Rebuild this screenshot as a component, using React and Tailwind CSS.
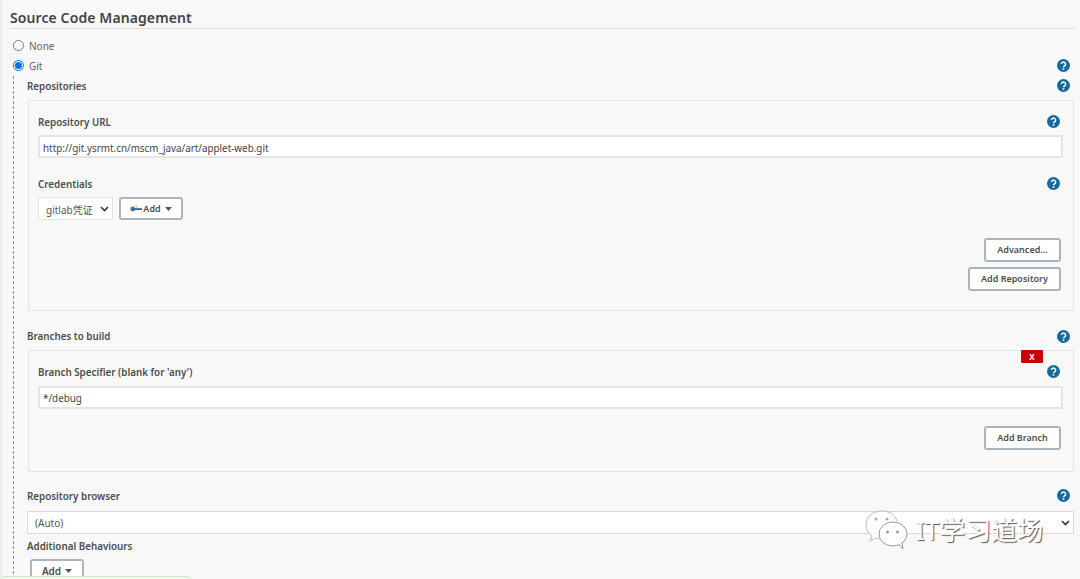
const Help = ({ lift = true }) => (
  <svg className={`shrink-0 ${lift ? "mb-[2px]" : ""}`} width="13" height="13" viewBox="0 0 13 13">
    <circle cx="6.5" cy="6.5" r="6.5" fill="#14699f" />
    <path d="M4.4 5.1a2.1 2 0 1 1 3.2 1.7c-.7.4-1.1.8-1.1 1.5" fill="none" stroke="#fff" strokeWidth="1.5" />
    <rect x="5.7" y="9.2" width="1.6" height="1.6" fill="#fff" />
  </svg>
);

const Label = ({ children, className = "", lift = true }) => (
  <div className={`flex items-center justify-between font-semibold text-[9.8px] text-[#4d4d4d] ${className}`}>
    <span className="pt-[2px]">{children}</span>
    <Help lift={lift} />
  </div>
);

const Btn = ({ children, className = "" }) => (
  <div className={`flex items-center justify-center bg-white border-2 border-[#a9b5bd] rounded-[3px] font-semibold text-[9px] text-[#4d4d4d] ${className}`}>
    {children}
  </div>
);

const Caret = () => (
  <svg className="ml-1" width="7" height="4" viewBox="0 0 7 4"><path d="M0 0h7L3.5 4z" fill="#555" /></svg>
);

const Chevron = () => (
  <svg width="9" height="6" viewBox="0 0 9 6"><path d="M1 1l3.5 3.5L8 1" fill="none" stroke="#333" strokeWidth="1.6" /></svg>
);

const TextBox = ({ children, className = "" }) => (
  <div className={`flex items-center h-[23px] pl-[3px] bg-white border-2 border-[#e4e4e4] rounded-[2px] text-[9.85px] text-[#444] ${className}`}>
    {children}
  </div>
);

export default function App() {
  return (
    <div className="relative w-[1080px] h-[579px] overflow-hidden bg-[#f8f8f8] border-l-2 border-[#ececec] font-['Noto_Sans','Open_Sans',sans-serif]">
      <div className="ml-[8px] mr-[5px] h-[29px] pt-[6px] border-b border-[#e2e2e2] font-semibold text-[14px] leading-[23px] tracking-[0.1px] text-[#444]">
        Source Code Management
      </div>

      <div className="flex items-center h-[20px] mt-[7px] ml-[11px] text-[10px] text-[#666]">
        <span className="w-[11px] h-[11px] mb-[2px] rounded-full border border-[#777] bg-white mr-[5px]" />
        None
      </div>
      <div className="flex items-center justify-between h-[20px] ml-[11px] mr-[10px] text-[10px] text-[#666]">
        <div className="flex items-center">
          <span className="flex items-center justify-center w-[11px] h-[11px] mb-[1px] rounded-full border border-[#0f6fe0] bg-white mr-[5px]">
            <span className="w-[7px] h-[7px] rounded-full bg-[#0f6fe0]" />
          </span>
          Git
        </div>
        <Help />
      </div>

      <div className="ml-[11px] mr-[6px] border-l border-dashed border-[#8d8d8d] pl-[13px] h-[503px]">
        <div className="mr-[4px]">
          <Label className="h-[20px]">Repositories</Label>
        </div>
        <div className="h-[211px] mt-[4px] ml-[1px] pl-[9px] pr-[10px] border border-[#e6e6e6]">
          <Label className="h-[14px] mt-[14px] mr-[3px]">Repository URL</Label>
          <div className="mt-[6px]">
            <TextBox className="pt-[4px]">http://git.ysrmt.cn/mscm_java/art/applet-web.git</TextBox>
          </div>
          <Label className="h-[14px] mt-[19px] mr-[3px]">Credentials</Label>
          <div className="flex gap-[6px] mt-[6px]">
            <div className="flex items-center justify-between w-[75px] h-[23px] pl-[7px] pr-[3px] bg-white border border-[#e4e4e4] text-[10px] text-[#555] font-['Noto_Sans','Noto_Sans_CJK_SC',sans-serif]">
              <span className="mt-[3px]">gitlab凭证</span>
              <Chevron />
            </div>
            <Btn className="w-[64px] h-[23px]">
              <svg className="mr-[1px]" width="12" height="8" viewBox="0 0 11 7">
                <circle cx="2.5" cy="3.5" r="2.2" fill="#3b7bb0" />
                <rect x="3" y="2.8" width="8" height="1.6" fill="#3c5a78" />
                <circle cx="6" cy="1.2" r="1.2" fill="#f4dd4a" />
              </svg>
              Add
              <Caret />
            </Btn>
          </div>
          <div className="flex flex-col items-end gap-[5px] mt-[18px] mr-[2px]">
            <Btn className="w-[77px] h-[24px]">Advanced...</Btn>
            <Btn className="w-[93px] h-[24px]">Add Repository</Btn>
          </div>
        </div>

        <div className="mr-[4px]">
          <Label className="h-[14px] mt-[18px]" lift={false}>Branches to build</Label>
        </div>
        <div className="h-[122px] mt-[7px] ml-[1px] pl-[9px] pr-[10px] border border-[#e6e6e6]">
          <div className="flex justify-end mr-[20px] mt-[-1px]">
            <div className="flex items-center justify-center w-[22px] h-[13px] bg-[#cc0003] rounded-[1px] font-bold text-[8px] text-white">
              X
            </div>
          </div>
          <Label className="h-[14px] mt-[2px] mr-[3px]">Branch Specifier (blank for 'any')</Label>
          <div className="mt-[7px]">
            <TextBox className="pt-[2px]">*/debug</TextBox>
          </div>
          <div className="flex justify-end mt-[17px] mr-[2px]">
            <Btn className="w-[77px] h-[24px]">Add Branch</Btn>
          </div>
        </div>

        <div className="mr-[4px]">
          <Label className="h-[14px] mt-[17px]">Repository browser</Label>
        </div>
        <div className="flex items-center justify-between h-[23px] mt-[8px] pl-[7px] pr-[3px] bg-white border border-[#d9d9d9] text-[10px] text-[#555]">
          <span className="pt-[2px]">(Auto)</span>
          <Chevron />
        </div>
        <div className="h-[14px] mt-[6px] font-semibold text-[9.8px] leading-[14px] text-[#4d4d4d]">
          Additional Behaviours
        </div>
        <Btn className="w-[54px] h-[24px] mt-[5px] ml-[3px] text-[10px]">
          Add
          <Caret />
        </Btn>
      </div>

      {/* green notification peeking in at the bottom edge */}
      <div className="absolute left-[-2px] top-[576px] w-[192px] h-[20px] bg-[#f2f8ee] border border-[#cfe5c4] rounded-t-[5px]" />

      {/* watermark */}
      <div className="absolute left-[861px] top-[508px] flex items-center">
        <svg width="48" height="44" viewBox="0 0 48 44">
          <path d="M19 3C9 3 3 9 3 17c0 5 3 9 6 11l-2 5 6-3c2 .6 3 .8 5 .8" fill="#fff" fillOpacity="0.85" stroke="#bbb" strokeWidth="1" />
          <ellipse cx="30" cy="26" rx="14" ry="12" fill="#fff" stroke="#999" strokeWidth="1" />
          <path d="M36 36l4 5-1-7" fill="#fff" stroke="#999" strokeWidth="1" />
          <path d="M19 3c8 0 13 4 15 10" fill="none" stroke="#bbb" strokeWidth="1" />
          <circle cx="13" cy="11" r="1.5" fill="#aaa" />
          <circle cx="24" cy="11" r="1.5" fill="#aaa" />
          <circle cx="24.5" cy="24" r="1.5" fill="#999" />
          <circle cx="34.5" cy="24" r="1.5" fill="#999" />
        </svg>
        <span className="ml-[5px] text-[26px] leading-[30px] text-white [text-shadow:1px_1px_1px_#555] font-['Noto_Sans','Noto_Sans_CJK_SC',sans-serif]">
          IT学习道场
        </span>
      </div>
    </div>
  );
}
